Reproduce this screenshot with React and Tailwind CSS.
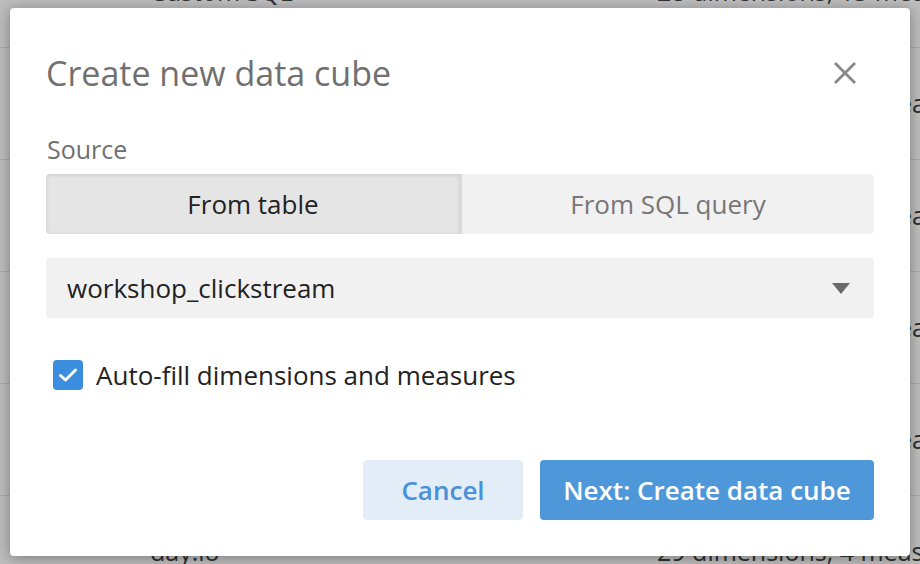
const rows = [
  { name: "Custom SQL", info: "28 dimensions, 13 measures" },
  { name: "clickstream", info: "24 dimensions, 12 measures" },
  { name: "wikipedia", info: "22 dimensions, 10 measures" },
  { name: "koalas", info: "21 dimensions, 11 measures" },
  { name: "twitter", info: "26 dimensions, 14 measures" },
  { name: "day.io", info: "29 dimensions, 4 measures" },
];

function CloseIcon() {
  return (
    <svg width="22" height="22" viewBox="0 0 22 22" fill="none">
      <path d="M2 2L20 20M20 2L2 20" stroke="#888888" strokeWidth="2.8" strokeLinecap="square" />
    </svg>
  );
}

function CheckIcon() {
  return (
    <svg width="20" height="16" viewBox="0 0 20 16" fill="none">
      <path d="M2.5 8.5L7.5 13L17.5 3" stroke="white" strokeWidth="3" strokeLinecap="round" strokeLinejoin="round" />
    </svg>
  );
}

export default function App() {
  return (
    <div
      className="relative w-[920px] h-[564px] overflow-hidden bg-[#bdbdbd]"
      style={{ fontFamily: '"Open Sans", "Noto Sans", sans-serif' }}
    >
      {/* ── BACKGROUND TABLE (dimmed) ── */}
      <div className="-mt-[64px] flex flex-col">
        {rows.map((r, i) => (
          <div
            key={i}
            className="h-[112px] shrink-0 flex items-center border-b border-[#aaaaaa] text-[25px] text-[#2e2e2e] whitespace-nowrap"
          >
            <span className="pl-[150px] w-[657px] shrink-0">{r.name}</span>
            <span>{r.info}</span>
          </div>
        ))}
      </div>

      {/* ── MODAL ── */}
      <div className="absolute left-[10px] top-[8px] w-[900px] h-[548px] bg-white rounded-[4px] shadow-[0_2px_14px_rgba(0,0,0,0.35)] px-[36px] pt-[45px] flex flex-col">
        <div className="flex items-center justify-between">
          <h1 className="text-[34px] leading-[40px] text-[#707070]">Create new data cube</h1>
          <button className="mr-[18px]">
            <CloseIcon />
          </button>
        </div>

        <div className="mt-[41px] text-[25px] leading-[30px] text-[#707070] ml-px">Source</div>

        <div className="mt-[10px] h-[60px] flex rounded-[4px] bg-[#f1f1f1] text-[26px]">
          <div className="w-[416px] shrink-0 flex items-center justify-center rounded-l-[4px] bg-[#e5e5e5] border-r-[2px] border-[#d9d9d9] shadow-[inset_0_1px_4px_rgba(0,0,0,0.12)] text-[#222222]">
            From table
          </div>
          <div className="flex-1 flex items-center justify-center text-[#777777]">From SQL query</div>
        </div>

        <div className="mt-[24px] h-[60px] flex items-center justify-between rounded-[4px] bg-[#f1f1f1] pl-[21px] pr-[24px] text-[26px] text-[#222222]">
          <span>workshop_clickstream</span>
          <svg width="18" height="11" viewBox="0 0 18 11">
            <path d="M0 0H18L9 11Z" fill="#6a6a6a" />
          </svg>
        </div>

        <div className="mt-[42px] h-[30px] flex items-center">
          <div className="ml-[7px] w-[30px] h-[30px] rounded-[4px] bg-[#3b8ede] flex items-center justify-center">
            <CheckIcon />
          </div>
          <span className="ml-[13px] text-[26px] text-[#222222]">Auto-fill dimensions and measures</span>
        </div>

        <div className="mt-[70px] flex justify-end gap-[17px]">
          <button className="w-[160px] h-[60px] rounded-[4px] bg-[#e2edf8] text-[26px] font-semibold text-[#4a90d9]">
            Cancel
          </button>
          <button className="w-[334px] h-[60px] rounded-[4px] bg-[#4e98da] text-[26px] font-semibold text-white">
            Next: Create data cube
          </button>
        </div>
      </div>
    </div>
  );
}
